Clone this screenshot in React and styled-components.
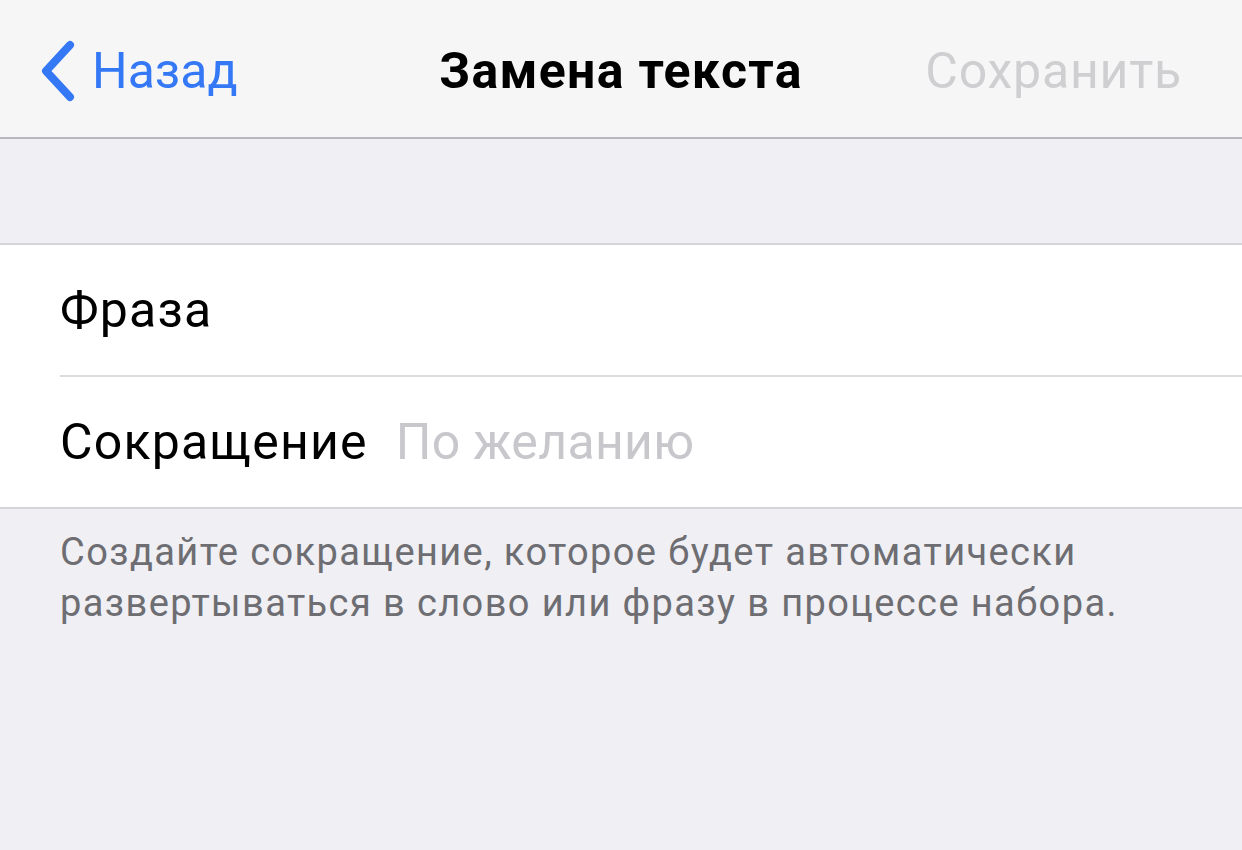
import React from 'react';
import styled, { createGlobalStyle } from 'styled-components';

const GlobalStyle = createGlobalStyle`
  html, body {
    margin: 0;
    padding: 0;
    background: #efeff4;
    font-family: Roboto, "Noto Sans", "Liberation Sans", sans-serif;
    -webkit-font-smoothing: antialiased;
  }
`;

const Page = styled.div`
  width: 1242px;
  height: 850px;
  background: #efeff4;
  overflow: hidden;
`;

const NavBar = styled.header`
  height: 137px;
  box-sizing: border-box;
  padding: 4px 38px 0;
  background: #f6f6f7;
  border-bottom: 2px solid #b9b9bd;
  display: grid;
  grid-template-columns: 1fr auto 1fr;
  align-items: center;
  box-sizing: content-box;
  height: 133px;
`;

const BackButton = styled.div`
  display: flex;
  align-items: center;
  gap: 14px;
  color: #3478f6;
  font-size: 50px;
`;

const Title = styled.h1`
  margin: 0;
  font-size: 50px;
  font-weight: 700;
  letter-spacing: 1.3px;
  color: #000;
`;

const SaveButton = styled.div`
  justify-self: end;
  margin-right: 22px;
  font-size: 50px;
  letter-spacing: 0.8px;
  color: #cfcfd2;
`;

const Spacer = styled.div`
  height: 104px;
`;

const Group = styled.section`
  background: #fff;
  border-top: 2px solid #d6d6da;
  border-bottom: 2px solid #d6d6da;
  padding-left: 60px;
`;

const Row = styled.div`
  height: 130px;
  display: flex;
  align-items: center;
  gap: 28px;
  border-top: ${(p) => (p.$first ? 'none' : '2px solid #dcdce0')};
`;

const Label = styled.span`
  font-size: 50px;
  letter-spacing: 1.2px;
  color: #000;
`;

const Placeholder = styled.span`
  font-size: 50px;
  letter-spacing: 0.3px;
  color: #c7c7cc;
`;

const Footer = styled.p`
  margin: 0;
  padding: 18px 60px 0;
  font-size: 38px;
  line-height: 51px;
  letter-spacing: 1.4px;
  color: #6d6d72;
`;

function Chevron() {
  return (
    <svg width="40" height="64" viewBox="0 0 40 64">
      <path
        d="M32 6 L8 32 L32 58"
        fill="none"
        stroke="#3478f6"
        strokeWidth="8"
        strokeLinecap="round"
        strokeLinejoin="round"
      />
    </svg>
  );
}

export default function App() {
  return (
    <Page>
      <GlobalStyle />
      <NavBar>
        <BackButton>
          <Chevron />
          Назад
        </BackButton>
        <Title>Замена текста</Title>
        <SaveButton>Сохранить</SaveButton>
      </NavBar>
      <Spacer />
      <Group>
        <Row $first>
          <Label>Фраза</Label>
        </Row>
        <Row>
          <Label>Сокращение</Label>
          <Placeholder>По желанию</Placeholder>
        </Row>
      </Group>
      <Footer>
        Создайте сокращение, которое будет автоматически
        <br />
        развертываться в слово или фразу в процессе набора.
      </Footer>
    </Page>
  );
}
